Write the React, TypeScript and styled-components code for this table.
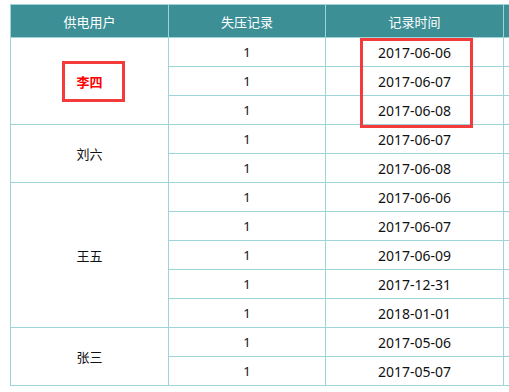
import React from 'react';
import styled, { createGlobalStyle } from 'styled-components';

const GlobalStyle = createGlobalStyle`
  html, body {
    margin: 0;
    padding: 0;
    background: #fff;
    overflow: hidden;
  }
  body {
    font-family: "Noto Sans", "Noto Sans CJK SC", sans-serif;
  }
`;

const Page = styled.div`
  position: relative;
  width: 509px;
  height: 392px;
  padding: 4px 0 0 10px;
  box-sizing: border-box;
  overflow: hidden;
`;

const Table = styled.table`
  border-collapse: collapse;
  table-layout: fixed;
  width: 613px;
  font-size: 13px;
  color: #111;
`;

const HeadCell = styled.th`
  height: 32px;
  padding: 0;
  background: #3d8f96;
  color: #fff;
  font-weight: normal;
  text-align: center;
  border: 1px solid #9ed3d7;
`;

const Cell = styled.td<{ $highlight?: boolean; $date?: boolean }>`
  height: 28px;
  padding: 0;
  text-align: center;
  border: 1px solid #9ed3d7;
  font-size: ${(p) => (p.$date ? '14px' : '13px')};
  color: ${(p) => (p.$highlight ? '#ff0000' : '#111')};
  font-weight: ${(p) => (p.$highlight ? 'bold' : 'normal')};
`;

const Mark = styled.div<{ $x: number; $y: number; $w: number; $h: number }>`
  position: absolute;
  left: ${(p) => p.$x}px;
  top: ${(p) => p.$y}px;
  width: ${(p) => p.$w}px;
  height: ${(p) => p.$h}px;
  border: 3px solid #f33b3b;
  box-sizing: border-box;
  pointer-events: none;
`;

type Group = { user: string; dates: string[]; highlight?: boolean };

const groups: Group[] = [
  { user: '李四', dates: ['2017-06-06', '2017-06-07', '2017-06-08'], highlight: true },
  { user: '刘六', dates: ['2017-06-07', '2017-06-08'] },
  { user: '王五', dates: ['2017-06-06', '2017-06-07', '2017-06-09', '2017-12-31', '2018-01-01'] },
  { user: '张三', dates: ['2017-05-06', '2017-05-07'] },
];

export default function App() {
  return (
    <Page>
      <GlobalStyle />
      <Table>
        <colgroup>
          <col style={{ width: 158 }} />
          <col style={{ width: 157 }} />
          <col style={{ width: 178 }} />
          <col style={{ width: 120 }} />
        </colgroup>
        <thead>
          <tr>
            <HeadCell>供电用户</HeadCell>
            <HeadCell>失压记录</HeadCell>
            <HeadCell>记录时间</HeadCell>
            <HeadCell />
          </tr>
        </thead>
        <tbody>
          {groups.map((g) =>
            g.dates.map((d, i) => (
              <tr key={g.user + d}>
                {i === 0 && (
                  <Cell rowSpan={g.dates.length} $highlight={g.highlight}>
                    {g.user}
                  </Cell>
                )}
                <Cell>1</Cell>
                <Cell $date>{d}</Cell>
                <Cell />
              </tr>
            ))
          )}
        </tbody>
      </Table>
      <Mark $x={62} $y={61} $w={63} $h={41} />
      <Mark $x={360} $y={38} $w={113} $h={90} />
    </Page>
  );
}
